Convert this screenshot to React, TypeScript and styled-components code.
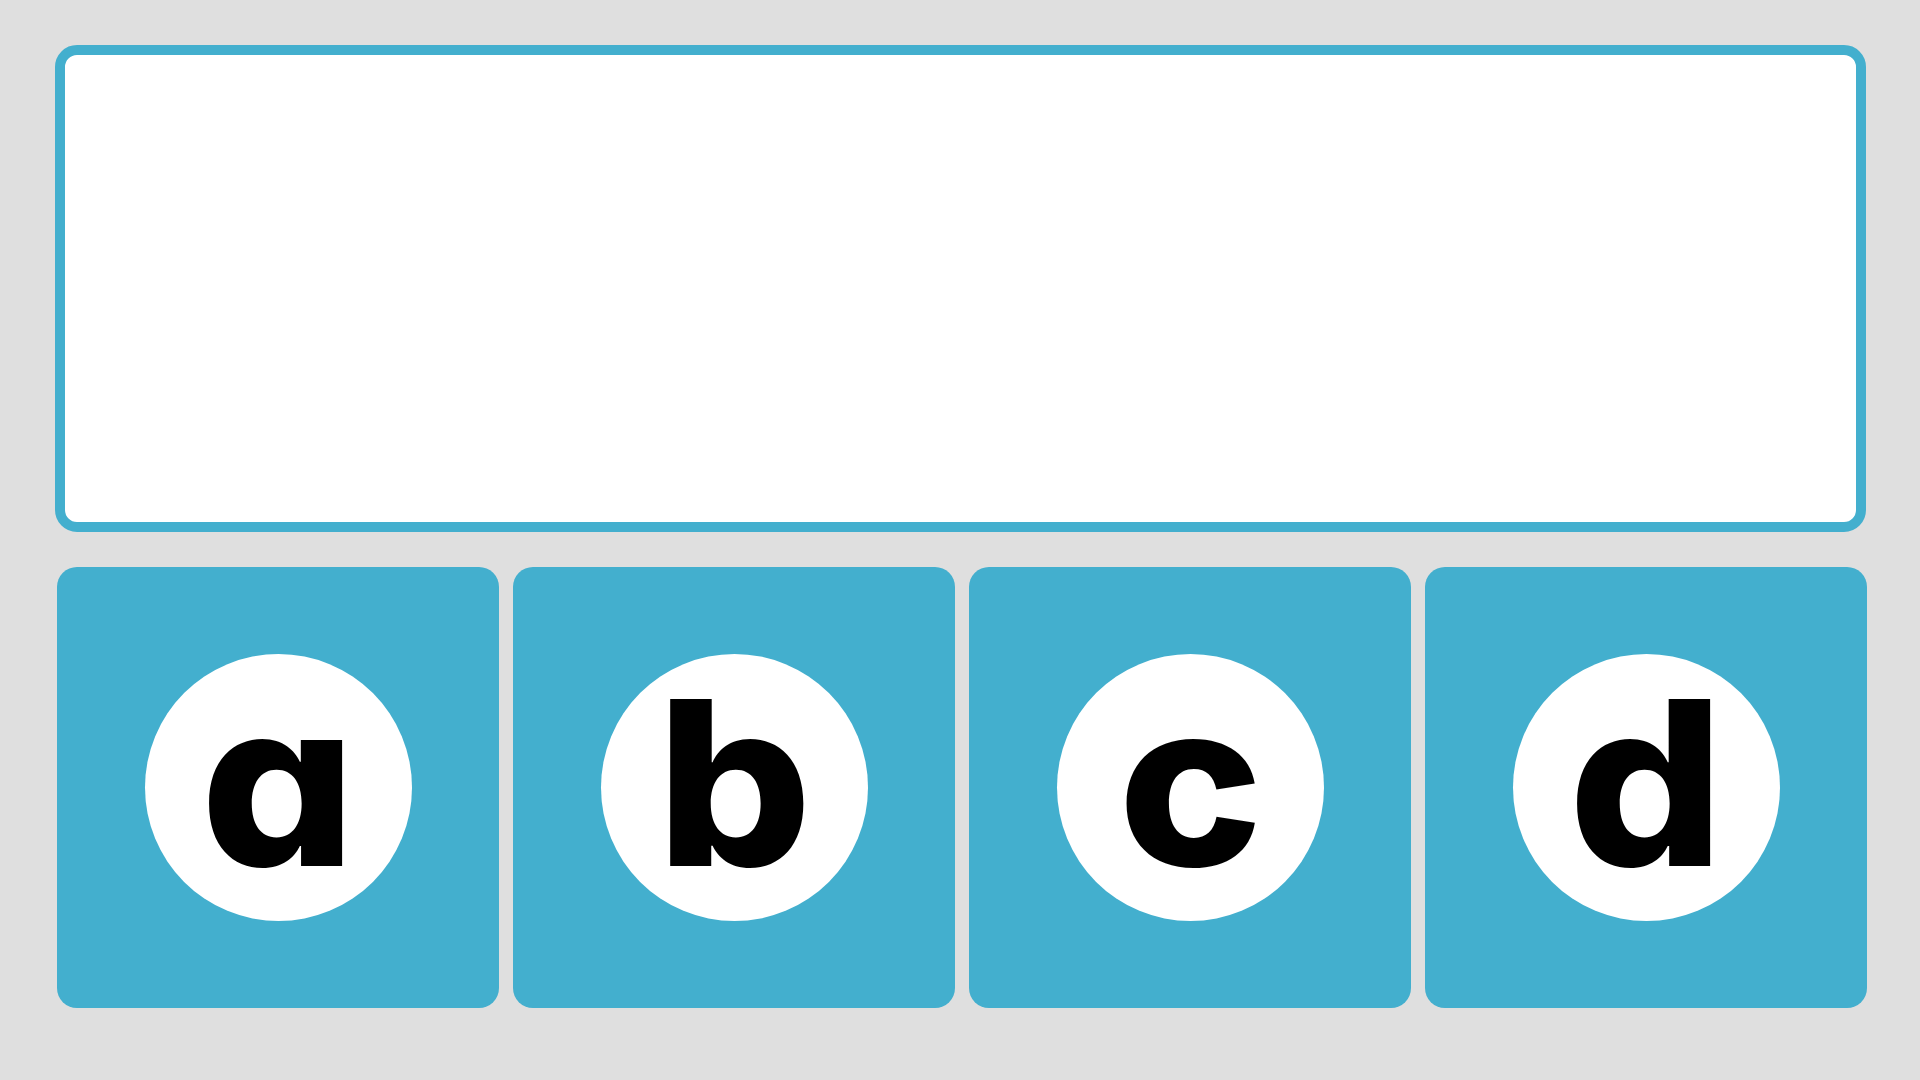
import React from 'react';
import styled, { createGlobalStyle } from 'styled-components';

const GlobalStyle = createGlobalStyle`
    html, body {
        margin: 0;
        padding: 0;
        background: #dfdfdf;
    }
    body {
        font-family: Inter, "Liberation Sans", sans-serif;
    }
`;

const Page = styled.div`
    width: 1920px;
    height: 1080px;
    box-sizing: border-box;
    padding: 45px 54px 0 55px;
    display: flex;
    flex-direction: column;
    gap: 35px;
`;

// answer area the tiles are dropped into
const DropZone = styled.div`
    height: 487px;
    box-sizing: border-box;
    border: 10px solid #43afce;
    border-radius: 22px;
    background: #ffffff;
`;

const TileRow = styled.div`
    display: grid;
    grid-template-columns: repeat(4, 1fr);
    gap: 14px;
    padding-left: 2px;
    margin-right: -1px;
`;

const Tile = styled.div`
    height: 441px;
    border-radius: 20px;
    background: #43afce;
    display: flex;
    align-items: center;
    justify-content: center;
`;

const Bubble = styled.div`
    width: 267px;
    height: 267px;
    border-radius: 50%;
    background: #ffffff;
    display: flex;
    align-items: center;
    justify-content: center;
`;

const Letter = styled.span`
    font-family: Inter, "Liberation Sans", sans-serif;
    font-weight: 800;
    font-size: 230px;
    line-height: 1;
    color: #000000;
    font-feature-settings: "cv11" 1;
    transform: translateY(-6px) scaleX(1.06);
`;

const letters = ['a', 'b', 'c', 'd'];

const App: React.FC = () => {
    return (
        <>
            <GlobalStyle />
            <Page>
                <DropZone />
                <TileRow>
                    {letters.map(l => (
                        <Tile key={l}>
                            <Bubble>
                                <Letter>{l}</Letter>
                            </Bubble>
                        </Tile>
                    ))}
                </TileRow>
            </Page>
        </>
    );
};

export default App;
